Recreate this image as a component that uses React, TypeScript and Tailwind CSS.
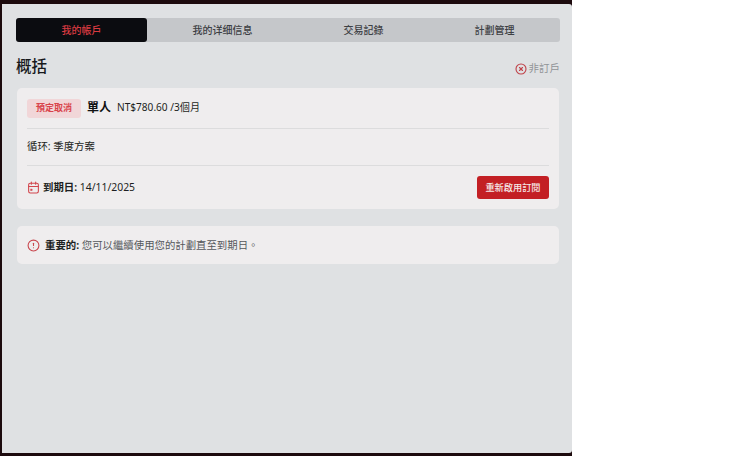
import { CircleAlert, CircleX } from 'lucide-react';

const TABS = ['我的帳戶', '我的详细信息', '交易記錄', '計劃管理'];

// calendar with a small dot, lucide has none with this exact shape
function CalendarIcon() {
  return (
    <svg width="13" height="13" viewBox="0 0 24 24" fill="none" stroke="#d2474e" strokeWidth="2" strokeLinecap="round" strokeLinejoin="round">
      <path d="M8 2v4" />
      <path d="M16 2v4" />
      <rect x="3" y="4" width="18" height="18" rx="3" />
      <path d="M3 10h18" />
      <rect x="7" y="15" width="2.5" height="2.5" fill="#d2474e" strokeWidth="1" />
    </svg>
  );
}

export default function App() {
  return (
    <div className="w-[572px] h-[456px] bg-[#1c0a0d] pt-[4px] pb-[3px] pl-[2px] font-['Noto_Sans','Noto_Sans_CJK_TC',sans-serif]">
      <div className="h-full bg-[#dfe1e3] rounded-tr-[3px] rounded-br-[3px] pt-[14px] pl-[14px] pr-[12px]">
        {/* Tabs */}
        <div className="flex h-[24px] bg-[#c5c7ca] rounded-[3px]">
          {TABS.map((tab, index) => (
            <div
              key={tab}
              className={
                index === 0
                  ? 'flex-auto flex items-center justify-center rounded-[3px] bg-[#0b0c10] text-[10px] font-medium text-[#d93a40]'
                  : 'flex-auto flex items-center justify-center text-[10px] font-medium text-[#3d4044]'
              }
            >
              {tab}
            </div>
          ))}
        </div>

        {/* Header */}
        <div className="flex items-center justify-between mt-[13px] h-[24px]">
          <h1 className="text-[15.5px] font-medium text-[#17191c]">概括</h1>
          <div className="flex items-center gap-[2px] mt-[3px] text-[10.5px] text-[#909397]">
            <CircleX size={12} strokeWidth={2.25} className="text-[#c0434a]" />
            <span>非訂戶</span>
          </div>
        </div>

        {/* Plan card */}
        <div className="mt-[9px] ml-[1px] mr-[1px] h-[121px] bg-[#efedee] rounded-[5px] px-[10px]">
          <div className="flex items-center h-[41px] border-b border-[#dcdcdd]">
            <span className="flex items-center justify-center w-[54px] h-[19px] rounded-[3px] bg-[#f1d6d8] text-[9px] font-semibold text-[#d9444c]">
              預定取消
            </span>
            <span className="ml-[6px] text-[12px] font-bold text-[#111214]">單人</span>
            <span className="ml-[6px] text-[10.1px] text-[#1d1f22]">NT$780.60 /3個月</span>
          </div>
          <div className="flex items-center h-[37px] border-b border-[#dcdcdd] text-[10.4px] text-[#1d1f22]">
            循环: 季度方案
          </div>
          <div className="flex items-center justify-between h-[43px]">
            <div className="flex items-center gap-[3px] pt-[1px] text-[10.4px] text-[#1d1f22]">
              <CalendarIcon />
              <span>
                <span className="font-semibold">到期日:</span> 14/11/2025
              </span>
            </div>
            <button className="w-[72px] h-[23px] rounded-[3px] bg-[#c31f24] text-[9.2px] font-medium text-[#f5e9e9]">
              重新啟用訂閱
            </button>
          </div>
        </div>

        {/* Notice */}
        <div className="flex items-center gap-[5px] mt-[17px] ml-[1px] mr-[1px] h-[38px] bg-[#efedee] rounded-[5px] pl-[10px] pt-[1px] text-[10.4px] text-[#55585c]">
          <CircleAlert size={13} strokeWidth={2} className="text-[#c9474e]" />
          <span>
            <span className="font-bold text-[#1d1f22]">重要的:</span> 您可以繼續使用您的計劃直至到期日。
          </span>
        </div>
      </div>
    </div>
  );
}
